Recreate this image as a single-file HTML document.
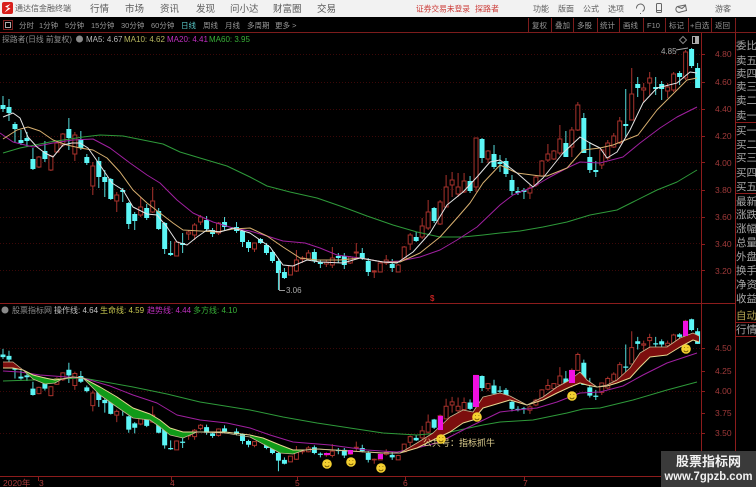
<!DOCTYPE html>
<html lang="zh"><head><meta charset="utf-8"><title>通达信金融终端</title>
<style>
html,body{margin:0;padding:0;background:#000;width:756px;height:487px;overflow:hidden}
svg{display:block;font-family:"Liberation Sans","Noto Sans CJK SC",sans-serif;filter:blur(.35px)}
.ns{vector-effect:non-scaling-stroke}
</style></head><body>
<svg width="756" height="487" viewBox="0 0 756 487" xmlns="http://www.w3.org/2000/svg">
<defs>
<g id="candles">
<path class="ns" fill="none" stroke="#a8322c" d="M39 156V168M51 155V171M57 141V153M63 133V147M75 132V161M93 162V195M117 192V212M141 197V217M153 187V213M177 241V256M189 230V240M195 223V240M201 215V225M219 222V235M255 243V252M291 266V275M297 250V272M303 256V263M309 250V260M327 260V267M333 247V268M351 256V264M357 243V258M375 270V278M381 262V272M387 255V265M399 264V272M405 246V260M411 233V250M423 218V239M429 200V230M441 200V225M447 175V207M453 172V197M459 173V197M465 173V193M477 138V192M489 150V163M531 185V199M537 175V187M543 160V177M549 144V162M555 150V160M561 125V155M573 127V157M579 102V131M603 149V169M609 140V160M615 133V148M621 117V144M633 68V120M645 83V102M651 72V95M669 83V98M675 72V92M687 50V80"/>
<path class="ns" fill="#000" stroke="#a8322c" d="M37 157h4V167h-4zM49 156h4V170h-4zM55 143h4V152h-4zM61 134h4V145h-4zM73 135h4V154h-4zM91 166h4V186h-4zM115 195h4V201h-4zM139 207h4V215h-4zM151 201h4V212h-4zM175 242h4V256h-4zM187 232h4V234h-4zM193 225h4V235h-4zM199 217h4V222h-4zM217 223h4V233h-4zM253 243h4V249h-4zM289 266h4V275h-4zM295 260h4V271h-4zM301 258h4V259h-4zM307 253h4V259h-4zM325 262h4V264h-4zM331 258h4V265h-4zM349 257h4V263h-4zM355 252h4V253h-4zM373 271h4V272h-4zM379 263h4V272h-4zM385 260h4V263h-4zM397 265h4V272h-4zM403 247h4V259h-4zM409 235h4V244h-4zM421 226h4V237h-4zM427 212h4V228h-4zM439 202h4V224h-4zM445 187h4V207h-4zM451 180h4V185h-4zM457 187h4V194h-4zM463 181h4V192h-4zM475 138h4V187h-4zM487 151h4V159h-4zM529 188h4V193h-4zM535 177h4V185h-4zM541 161h4V176h-4zM547 154h4V160h-4zM553 151h4V159h-4zM559 139h4V153h-4zM571 130h4V147h-4zM577 105h4V130h-4zM601 150h4V165h-4zM607 143h4V158h-4zM613 136h4V147h-4zM619 121h4V143h-4zM631 94h4V120h-4zM643 88h4V90h-4zM649 78h4V83h-4zM667 87h4V91h-4zM673 74h4V90h-4zM685 52h4V78h-4z"/>
<path class="ns" fill="none" stroke="#55dcdc" d="M3 96V112M9 99V121M15 122V143M21 130V145M27 132V147M33 148V170M45 141V162M69 118V150M81 131V150M87 154V165M99 157V188M105 170V197M111 178V200M123 188V202M129 202V229M135 212V230M147 204V220M159 208V230M165 222V254M171 241V256M183 233V253M207 216V232M213 228V237M225 217V230M237 222V233M243 230V247M249 240V252M261 238V244M267 243V255M273 250V263M279 258V290M285 268V279M315 249V263M321 260V268M339 253V263M345 253V269M363 248V260M369 258V276M393 259V272M417 232V242M435 207V223M471 176V193M483 138V163M495 145V169M501 155V172M507 158V177M513 175V195M519 187V195M525 188V199M567 131V157M585 113V153M591 142V173M597 161V177M627 89V137M639 77V97M657 77V95M663 81V100M681 71V85M693 48V68M699 63V88"/>
<path fill="#5cf6f6" d="M.5 105h5V109h-5zM6.5 107h5V113h-5zM12.500 124h5V129h-5zM18.500 140h5V143h-5zM24.500 138h5V141h-5zM30.500 159h5V169h-5zM42.500 151h5V159h-5zM66.500 129h5V138h-5zM78.500 139h5V148h-5zM84.500 157h5V163h-5zM96.500 161h5V177h-5zM102.500 177h5V182h-5zM108.500 179h5V199h-5zM120.500 190h5V192h-5zM126.500 203h5V224h-5zM132.500 214h5V221h-5zM144.500 208h5V218h-5zM156.500 211h5V229h-5zM162.500 223h5V249h-5zM168.500 253h5V255h-5zM180.500 243h5V245h-5zM204.500 220h5V229h-5zM210.500 230h5V234h-5zM222.500 222h5V227h-5zM234.500 227h5V231h-5zM240.500 231h5V242h-5zM246.500 242h5V248h-5zM258.500 239h5V243h-5zM264.500 245h5V253h-5zM270.500 252h5V261h-5zM276.500 261h5V273h-5zM282.500 272h5V278h-5zM312.500 252h5V261h-5zM318.500 262h5V264h-5zM336.500 256h5V258h-5zM342.500 256h5V265h-5zM360.500 253h5V258h-5zM366.500 261h5V272h-5zM390.500 264h5V268h-5zM414.500 237h5V241h-5zM432.500 208h5V221h-5zM468.500 181h5V191h-5zM480.500 139h5V158h-5zM492.500 154h5V167h-5zM498.500 162h5V164h-5zM504.500 161h5V174h-5zM510.500 180h5V191h-5zM516.500 191h5V193h-5zM522.500 190h5V192h-5zM564.500 143h5V157h-5zM582.500 118h5V153h-5zM588.500 157h5V170h-5zM594.500 170h5V172h-5zM624.500 124h5V126h-5zM636.500 84h5V88h-5zM654.500 87h5V89h-5zM660.500 84h5V89h-5zM678.500 73h5V77h-5zM690.500 49h5V66h-5zM696.500 68h5V88h-5z"/>
</g>
</defs>

<!-- title bar -->
<rect x="0" y="0" width="756" height="17" fill="#f2f2f2"/>
<rect x="2" y="2" width="11" height="12" rx="2" fill="#d8201c"/>
<path d="M10.500 4L5 6.500L8 8L4.500 12.500L10.500 8.500L7.500 7.200z" fill="#fff"/>
<g fill="#5c5c5c" font-size="8">
<text x="15" y="11" textLength="56" lengthAdjust="spacingAndGlyphs">通达信金融终端</text>
<g font-size="9.500">
<text x="90" y="12">行情</text><text x="125" y="12">市场</text><text x="160" y="12">资讯</text><text x="196" y="12">发现</text><text x="230" y="12">问小达</text><text x="273" y="12">财富圈</text><text x="317" y="12">交易</text>
</g>
<g font-size="8">
<text x="533" y="11.500">功能</text><text x="558" y="11.500">版面</text><text x="583" y="11.500">公式</text><text x="608" y="11.500">选项</text><text x="715" y="11.500">游客</text>
</g>
</g>
<text x="416" y="11.500" font-size="8" fill="#cc3a36" textLength="54" lengthAdjust="spacingAndGlyphs">证券交易未登录</text>
<text x="475" y="11.500" font-size="8" fill="#cc3a36">探路者</text>
<g fill="none" stroke="#666" stroke-width="1">
<path d="M636.500 8.500a4 4 0 1 1 6 3M640 13.500h1"/>
<rect x="656.500" y="3.500" width="5" height="9" rx="1"/><path d="M656.500 10.500h5"/>
<path d="M677.500 6.500l8-1.500 1 5.500-6 1.500a3 3 0 0 1-3-5.500zM678 7l4 1.500 3.500-3"/>
</g>

<!-- toolbar -->
<rect x="0" y="17" width="756" height="15" fill="#000"/>
<rect x="3.500" y="20.500" width="9" height="9" fill="none" stroke="#7a2020"/>
<rect x="5.500" y="22.500" width="5" height="5" fill="none" stroke="#aaa"/>
<g fill="#989898" font-size="7.500">
<text x="19" y="28">分时</text><text x="39" y="28">1分钟</text><text x="65" y="28">5分钟</text><text x="91" y="28">15分钟</text><text x="121" y="28">30分钟</text><text x="151" y="28">60分钟</text>
<text x="181" y="28" fill="#58c8c8">日线</text><text x="203" y="28">周线</text><text x="225" y="28">月线</text><text x="247" y="28">多周期</text><text x="275" y="28">更多 &gt;</text>
<text x="532" y="28">复权</text><text x="555" y="28">叠加</text><text x="577" y="28">多股</text><text x="600" y="28">统计</text><text x="623" y="28">画线</text><text x="647" y="28">F10</text><text x="669" y="28">标记</text><text x="690" y="28">+自选</text><text x="715" y="28">返回</text>
</g>
<g stroke="#7c1c1c" fill="none">
<path d="M0 32.500H756"/>
<path d="M528.500 18V32M551.500 18V32M573.500 18V32M597.500 18V32M619.500 18V32M643.500 18V32M665.500 18V32M688.500 18V32M711.500 18V32M735.500 18V32"/>
</g>

<!-- grid -->
<g stroke="#3c0808" stroke-dasharray="1 2" fill="none">
<path d="M0 54.500H701M0 82.500H701M0 109.500H701M0 136.500H701M0 162.500H701M0 189.500H701M0 217.500H701M0 243.500H701M0 270.500H701"/>
<path d="M0 348.500H701M0 391.500H701M0 433.500H701"/>
</g>
<g stroke="#8c1c1c" fill="none">
<path d="M701.500 33V476M735.500 33V487M0 303.500H735M0 476.500H735"/>
<path d="M736 122.500H756M736 193.500H756M736 322.500H756M736 336.500H756"/>
<path d="M38.500 477V481M171.500 477V481M297.500 477V481M405.500 477V481M524.500 477V481"/>
<path d="M701 54.500h4M701 82.500h4M701 109.500h4M701 136.500h4M701 162.500h4M701 190.500h4M701 217.500h4M701 244.500h4M701 270.500h4M701 348.500h4M701 371.500h4M701 391.500h4M701 413.500h4M701 433.500h4"/>
</g>

<!-- info lines -->
<g font-size="8">
<text x="2" y="42" fill="#8e8e8e" textLength="70" lengthAdjust="spacingAndGlyphs">探路者(日线 前复权)</text>
<circle cx="79.500" cy="39" r="3.500" fill="#8a8a8a"/>
<text x="86" y="42" fill="#b8b8b8">MA5: 4.67</text>
<text x="124" y="42" fill="#b8b860">MA10: 4.62</text>
<text x="167" y="42" fill="#c030c0">MA20: 4.41</text>
<text x="209" y="42" fill="#38b038">MA60: 3.95</text>
</g>
<g font-size="8">
<circle cx="5" cy="310" r="3.500" fill="#8a8a8a"/>
<text x="12" y="313" fill="#8e8e8e">股票指标网</text>
<text x="54" y="313" fill="#c4c4c4">操作线: 4.64</text>
<text x="100" y="313" fill="#c8c850">生命线: 4.59</text>
<text x="147" y="313" fill="#c030c0">趋势线: 4.44</text>
<text x="193" y="313" fill="#38b038">多方线: 4.10</text>
</g>

<!-- top chart -->
<use href="#candles" transform="matrix(.998 0 0 1 0 0)"/>
<g fill="none" stroke-width="1" stroke-linejoin="round">
<path stroke="#2e9a3a" d="M3 153L20 148L50 142L83 137L100 135L123 136L143 140L163 144L180 152L200 158L227 166L250 177L267 186L290 192L317 198L343 207L367 216L393 225L417 232L440 237L463 237L483 235L500 233L520 231L543 227L567 222L590 215L617 210L633 202L657 190L677 182L697 170"/>
<path stroke="#a020a0" d="M0 133L13 142L33 147L53 143L73 140L93 139L110 148L130 163L147 175L160 183L177 200L193 213L213 222L233 228L250 231L267 236L283 241L305 243L320 248L337 255L360 258L383 262L400 261L420 257L440 250L457 240L477 227L500 205L513 195L533 187L550 177L567 168L580 162L600 163L623 157L640 143L660 128L677 117L697 107"/>
<path stroke="#d8b070" d="M3 139L17 130L28 127L40 131L53 140L67 145L80 148L93 150L107 158L120 172L133 190L147 203L160 213L173 223L183 230L200 231L217 232L233 229L250 228L267 236L283 247L300 258L317 260L340 260L360 258L383 262L400 262L420 253L440 237L457 218L470 203L483 183L500 165L517 173L540 176L547 176L567 168L583 150L600 148L613 145L638 135L657 110L677 90L687 80L697 78"/>
<path stroke="#e4e4e4" d="M3 117L13 113L20 118L28 137L37 147L45 153L53 157L63 145L72 143L80 143L88 148L100 165L112 183L123 190L133 207L147 214L157 215L167 227L177 242L187 245L197 237L207 230L220 232L233 228L250 233L270 247L283 265L293 266L307 260L320 262L343 263L360 258L383 262L397 263L413 252L430 233L447 205L463 192L477 177L490 162L500 160L517 173L533 187L543 178L563 153L580 137L590 143L600 148L607 158L617 152L630 130L643 103L657 88L677 83L690 72L697 73"/>
</g>

<!-- annotations -->
<path d="M279.500 270V290.500H285" fill="none" stroke="#9a9a9a"/>
<text x="286" y="293" font-size="8" fill="#a8a8a8">3.06</text>
<text x="661" y="54" font-size="8" fill="#a8a8a8">4.85</text>
<path d="M676 50L688 48" stroke="#a8a8a8"/>
<path d="M683 36.500L686.500 40L683 43.500L679.500 40z" fill="none" stroke="#888"/>
<rect x="692.500" y="36.500" width="6" height="7" fill="none" stroke="#aaa"/>
<rect x="695" y="37" width="3" height="6" fill="#aaa"/>
<text x="430" y="301" font-size="8" font-weight="bold" fill="#c02020">$</text>

<!-- price axis -->
<g font-size="8.500" fill="#a03a3a">
<text x="715" y="57">4.80</text><text x="715" y="85">4.60</text><text x="715" y="112">4.40</text><text x="715" y="139">4.20</text><text x="715" y="166">4.00</text><text x="715" y="193">3.80</text><text x="715" y="220">3.60</text><text x="715" y="247">3.40</text><text x="715" y="274">3.20</text>
<text x="715" y="351">4.50</text><text x="715" y="374">4.25</text><text x="715" y="394">4.00</text><text x="715" y="416">3.75</text><text x="715" y="436">3.50</text>
</g>

<!-- side labels -->
<g font-size="10.500" fill="#a8a8a8">
<text x="736" y="49">委比</text><text x="736" y="64">卖五</text><text x="736" y="77">卖四</text><text x="736" y="90">卖三</text><text x="736" y="104">卖二</text><text x="736" y="119">卖一</text>
<text x="736" y="134">买一</text><text x="736" y="148">买二</text><text x="736" y="161">买三</text><text x="736" y="176">买四</text><text x="736" y="190">买五</text>
<text x="736" y="205">最新</text><text x="736" y="218">涨跌</text><text x="736" y="232">涨幅</text><text x="736" y="246">总量</text><text x="736" y="260">外盘</text><text x="736" y="274">换手</text><text x="736" y="288">净资</text><text x="736" y="302">收益</text>
<text x="736" y="319" fill="#b0a050">自动</text><text x="736" y="333">行情</text>
</g>

<!-- lower chart -->
<use href="#candles" transform="matrix(.998 0 0 .631 0 288.300)"/>
<g fill="none" stroke-linejoin="round">
<path stroke="#2e9a3a" d="M3 381L33 380L83 378L133 387L167 394L200 402L250 410L283 417L317 423L350 428L383 433L417 435L450 432L483 425L500 422L533 420L567 413L583 409L600 408L633 400L667 390L697 382"/>
<path stroke="#a020a0" d="M3 371L20 372L40 375L67 377L83 378L110 386L133 395L157 403L177 415L200 420L227 423L250 428L270 435L293 442L330 445L367 450L397 452L417 448L440 442L467 428L500 412L517 410L537 408L557 402L580 393L600 392L623 386L643 375L667 363L697 353"/>
</g>
<!-- bands -->
<path fill="#7c0e0e" d="M3 362L13 362L23 370L13 368L3 368zM400 453L417 443L433 433L450 417L463 410L473 412L483 397L500 393L510 396L527 405L510 400L500 403L483 408L473 420L463 423L450 432L433 440L417 448zM527 405L543 397L557 387L570 380L580 372L587 380L597 387L587 385L580 383L570 387L557 393L543 400zM597 387L607 385L617 380L630 368L640 353L650 347L667 347L680 338L693 333L699 336L699 342L693 340L680 347L667 355L650 357L640 367L630 378L617 383L607 386z"/>
<path fill="#109a18" d="M23 370L33 375L45 378L55 380L62 379L55 383L45 384L33 379zM83 378L100 387L117 397L133 408L150 414L160 420L170 428L183 432L197 432L183 438L170 435L160 427L150 420L133 418L117 407L100 395zM250 435L263 438L280 445L293 450L305 450L293 454L280 453L263 444L250 437z"/>
<g fill="none" stroke-linejoin="round">
<path stroke="#e8d890" d="M3 368L13 368L23 370L33 375L45 378L55 380L62 379L73 377L83 378L100 387L117 397L133 408L150 414L160 420L170 428L183 432L197 432L225 432L250 435L263 438L280 445L293 450L305 450L317 449L350 451L383 453L400 453L417 448L433 440L450 432L463 423L473 420L483 408L500 403L510 400L527 405L543 400L557 393L570 387L580 383L587 385L597 387L607 386L617 383L630 378L640 367L650 357L667 355L680 347L693 340L699 342"/>
<path stroke="#c8b890" stroke-width=".8" d="M3 362L13 362L23 370L33 379L45 384L55 383L62 379L73 377L83 378L100 395L117 407L133 418L150 420L160 427L170 435L183 438L197 432L225 433L250 437L263 444L280 453L293 454L305 450L317 449L350 451L383 453L400 453L417 443L433 433L450 417L463 410L473 412L483 397L500 393L510 396L527 405L543 397L557 387L570 380L580 372L587 380L597 387L607 385L617 380L630 368L640 353L650 347L667 347L680 338L693 333L699 336"/>
</g>
<!-- magenta blocks -->
<g fill="#f010e0">
<rect x="324" y="453" width="6" height="2"/><rect x="348" y="450" width="5" height="4"/><rect x="378" y="454" width="5" height="5"/>
<rect x="438" y="416" width="5" height="14"/><rect x="473" y="375" width="6" height="32"/><rect x="569" y="370" width="6" height="13"/><rect x="683" y="321" width="5" height="15"/>
</g>
<text x="423" y="446" font-size="9" fill="#e0d090">公共号：指标抓牛</text>
<!-- smileys -->
<g>
<g fill="#f4d030">
<circle cx="327" cy="464" r="4.800"/><circle cx="351" cy="462" r="4.800"/><circle cx="381" cy="468" r="4.800"/><circle cx="441" cy="439" r="4.800"/><circle cx="477" cy="417" r="4.800"/><circle cx="572" cy="396" r="4.800"/><circle cx="686" cy="349" r="4.800"/>
</g>
<g fill="none" stroke="#6a5000" stroke-width=".8">
<path d="M325 462.500h.8M328.500 462.500h.8M324.800 465.500a2.500 2.500 0 0 0 4.400 0"/>
<path d="M349 460.500h.8M352.500 460.500h.8M348.800 463.500a2.500 2.500 0 0 0 4.400 0"/>
<path d="M379 466.500h.8M382.500 466.500h.8M378.800 469.500a2.500 2.500 0 0 0 4.400 0"/>
<path d="M439 437.500h.8M442.500 437.500h.8M438.800 440.500a2.500 2.500 0 0 0 4.400 0"/>
<path d="M475 415.500h.8M478.500 415.500h.8M474.800 418.500a2.500 2.500 0 0 0 4.400 0"/>
<path d="M570 394.500h.8M573.500 394.500h.8M569.800 397.500a2.500 2.500 0 0 0 4.400 0"/>
<path d="M684 347.500h.8M687.500 347.500h.8M683.800 350.500a2.500 2.500 0 0 0 4.400 0"/>
</g>
</g>

<!-- date axis -->
<g font-size="8.500" fill="#a83c3c">
<text x="3" y="486">2020年</text><text x="39" y="486">3</text><text x="170" y="486">4</text><text x="295" y="486">5</text><text x="403" y="486">6</text><text x="523" y="486">7</text>
</g>

<!-- watermark -->
<rect x="661" y="451" width="95" height="36" fill="#3a3a3a"/>
<text x="708.500" y="466" font-size="13" font-weight="bold" fill="#f2f2f2" text-anchor="middle">股票指标网</text>
<text x="708.500" y="480" font-size="11.500" font-weight="bold" fill="#f2f2f2" text-anchor="middle" textLength="88" lengthAdjust="spacingAndGlyphs">www.7gpzb.com</text>
</svg>
</body></html>
